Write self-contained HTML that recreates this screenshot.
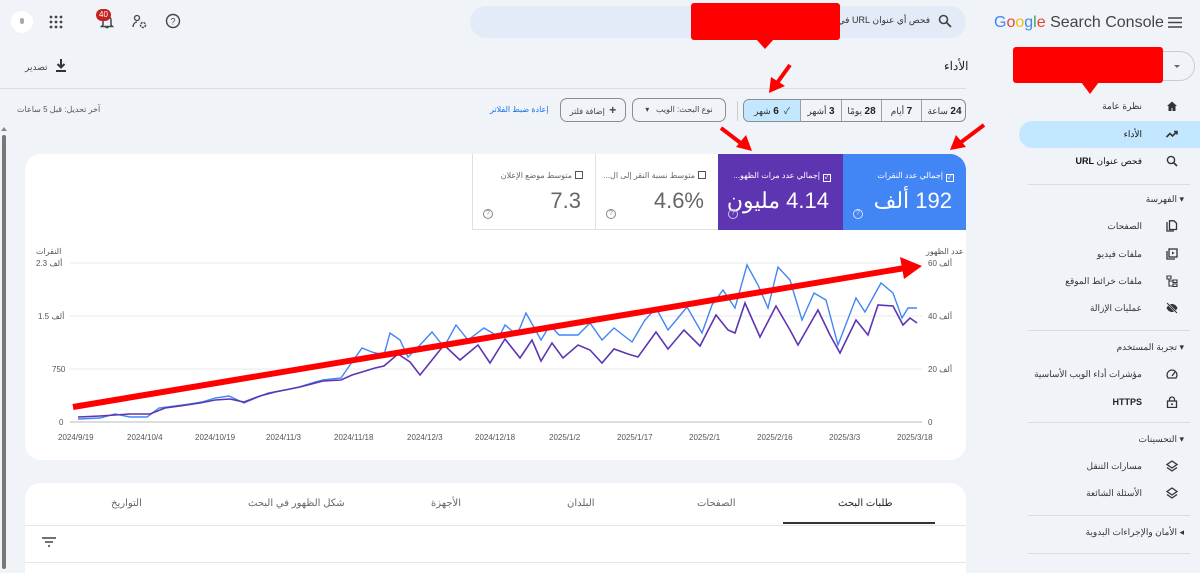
<!DOCTYPE html>
<html><head><meta charset="utf-8"><style>
*{box-sizing:border-box;margin:0;padding:0}
body{width:1200px;height:569px;overflow:hidden;background:#f0f4f9;font-family:"Liberation Sans","Noto Sans CJK SC",sans-serif;color:#1f1f1f;position:relative}
.a{position:absolute}
.t{font-size:9px;color:#444;white-space:nowrap;direction:rtl}
.side .it{position:absolute;right:0;width:180px;height:27px;font-size:9px;color:#333;text-align:right;padding-right:58px;line-height:27px;direction:rtl}
.side .ic{position:absolute;right:22px;top:7px;width:12px;height:12px}
.hr{position:absolute;height:1px;background:#dadce0}
.seg{position:absolute;top:0;height:22px;line-height:22px;font-size:9px;text-align:center;border-left:1px solid #9aa0a6;color:#333;direction:rtl}
.seg b{font-size:10px;color:#222}
.btn{position:absolute;height:24px;border:1px solid #8c8c8c;border-radius:7px;font-size:8px;line-height:22px;color:#444;text-align:center;direction:rtl}
.tile{position:absolute;top:154px;height:76px;width:124px;direction:rtl}
.tile .l{position:absolute;right:12px;top:17px;font-size:8px;white-space:nowrap}
.tile .v{position:absolute;right:14px;top:34px;font-size:22px;white-space:nowrap}
.tile .q{position:absolute;left:10px;top:55px;width:10px;height:10px;border:1px solid;border-radius:50%;font-size:7px;line-height:8px;text-align:center}
.cb{display:inline-block;width:8px;height:8px;border:1px solid;vertical-align:-1px;margin-left:3px;font-size:7px;line-height:6px;text-align:center}
</style></head><body>

<!-- header -->
<div class="a" style="left:11px;top:11px;width:22px;height:22px;border-radius:50%;background:#fff"><div class="a" style="left:9px;top:7px;width:4px;height:6px;border-radius:2px;background:#aaa"></div></div>
<svg class="a" style="left:49px;top:15px" width="14" height="14"><g fill="#444"><circle cx="2" cy="2" r="1.4"/><circle cx="7" cy="2" r="1.4"/><circle cx="12" cy="2" r="1.4"/><circle cx="2" cy="7" r="1.4"/><circle cx="7" cy="7" r="1.4"/><circle cx="12" cy="7" r="1.4"/><circle cx="2" cy="12" r="1.4"/><circle cx="7" cy="12" r="1.4"/><circle cx="12" cy="12" r="1.4"/></g></svg>
<svg class="a" style="left:100px;top:14px" width="14" height="16"><path d="M3 11V6a4 4 0 0 1 8 0v5l1.5 1.5H1.5z M5.5 13.5h3" fill="none" stroke="#444" stroke-width="1.5"/></svg>
<div class="a" style="left:96px;top:9px;width:15px;height:12px;border-radius:6px;background:#c5221f;color:#fff;font-size:8px;text-align:center;line-height:12px">40</div>
<svg class="a" style="left:132px;top:14px" width="16" height="16"><circle cx="5" cy="4" r="2.5" fill="none" stroke="#444" stroke-width="1.3"/><path d="M1 13c0-3 2-5 4-5" fill="none" stroke="#444" stroke-width="1.3"/><circle cx="11" cy="11" r="2.5" fill="none" stroke="#444" stroke-width="1.5" stroke-dasharray="2 1"/></svg>
<svg class="a" style="left:165px;top:13px" width="16" height="16"><circle cx="8" cy="8" r="6.5" fill="none" stroke="#444" stroke-width="1.4"/><text x="8" y="11.5" font-size="9" text-anchor="middle" fill="#444" font-family="Liberation Sans">?</text></svg>

<div class="a" style="left:470px;top:6px;width:496px;height:32px;border-radius:16px;background:#e4ebf8"></div>
<div class="a t" style="right:270px;top:15px;font-size:9px;color:#333">فحص أي عنوان URL في</div>
<svg class="a" style="left:938px;top:14px" width="14" height="14"><circle cx="5.5" cy="5.5" r="4" fill="none" stroke="#444" stroke-width="1.6"/><path d="M8.5 8.5L13 13" stroke="#444" stroke-width="1.8"/></svg>
<div class="a" style="left:691px;top:3px;width:149px;height:37px;background:#f00;border-radius:3px"></div>
<div class="a" style="left:756px;top:39px;border-left:9px solid transparent;border-right:9px solid transparent;border-top:10px solid #f00"></div>

<div class="a" style="left:994px;top:14px;font-size:16px;white-space:nowrap;color:#444"><span style="color:#4285f4">G</span><span style="color:#ea4335">o</span><span style="color:#fbbc05">o</span><span style="color:#4285f4">g</span><span style="color:#34a853">l</span><span style="color:#ea4335">e</span> Search Console</div>
<svg class="a" style="left:1168px;top:17px" width="14" height="11"><path d="M0 1h14M0 5.5h14M0 10h14" stroke="#444" stroke-width="1.5"/></svg>

<div class="a" style="left:1100px;top:51px;width:95px;height:30px;border:1px solid #ccc;border-radius:15px;background:#f0f4f9"></div>
<div class="a" style="left:1174px;top:65px;border-left:3px solid transparent;border-right:3px solid transparent;border-top:3px solid #666"></div>
<div class="a" style="left:1013px;top:47px;width:150px;height:36px;background:#f00;border-radius:3px"></div>
<div class="a" style="left:1081px;top:82px;border-left:9px solid transparent;border-right:9px solid transparent;border-top:12px solid #f00"></div>

<!-- title row -->
<div class="a" style="left:944px;top:59px;font-size:12px;color:#1f1f1f">الأداء</div>
<svg class="a" style="left:55px;top:59px" width="12" height="13"><path d="M6 0v8M2.5 5L6 8.5 9.5 5M1 12h10" fill="none" stroke="#333" stroke-width="2"/></svg>
<div class="a t" style="left:25px;top:62px;font-size:9px">تصدير</div>
<div class="hr" style="left:0;top:88px;width:966px"></div>

<!-- filters -->
<div class="a" style="left:743px;top:99px;width:223px;height:23px;border:1px solid #8c8c8c;border-radius:6px;overflow:hidden">
 <div class="seg" style="left:0;width:56px;background:#c2e7ff;border-left:none">✓ &nbsp;<b>6</b> شهر</div>
 <div class="seg" style="left:56px;width:41px"><b>3</b> أشهر</div>
 <div class="seg" style="left:97px;width:40px"><b>28</b> يومًا</div>
 <div class="seg" style="left:137px;width:40px"><b>7</b> أيام</div>
 <div class="seg" style="left:177px;width:46px"><b>24</b> ساعة</div>
</div>
<div class="a" style="left:737px;top:101px;width:1px;height:20px;background:#ccc"></div>
<div class="btn" style="left:632px;top:98px;width:94px">نوع البحث: الويب &nbsp; ▾</div>
<div class="btn" style="left:560px;top:98px;width:66px"><b style="font-size:12px">+</b>&nbsp; إضافة فلتر</div>
<div class="a t" style="left:490px;top:105px;font-size:8px;color:#1a73e8">إعادة ضبط الفلاتر</div>
<div class="a t" style="left:17px;top:105px;font-size:8px;color:#555">آخر تحديل: قبل 5 ساعات</div>

<!-- scrollbar -->
<div class="a" style="left:2px;top:135px;width:4px;height:434px;background:#777;border-radius:2px"></div>
<div class="a" style="left:1px;top:127px;border-left:3px solid transparent;border-right:3px solid transparent;border-bottom:4px solid #888"></div>

<!-- main card -->
<div class="a" style="left:25px;top:154px;width:941px;height:306px;background:#fff;border-radius:16px"></div>
<div class="tile" style="left:843px;width:123px;background:#4285f4;color:#fff;border-top-right-radius:16px"><div class="l"><span class="cb" style="border-color:#fff">✓</span>إجمالي عدد النقرات</div><div class="v">192 ألف</div><div class="q" style="border-color:#cfe0fc;color:#cfe0fc">?</div></div>
<div class="tile" style="left:718px;width:125px;background:#5e35b1;color:#fff"><div class="l"><span class="cb" style="border-color:#fff">✓</span>إجمالي عدد مرات الظهو...</div><div class="v">4.14 مليون</div><div class="q" style="border-color:#d0c4ee;color:#d0c4ee">?</div></div>
<div class="tile" style="left:595px;width:123px;border-left:1px solid #e0e0e0;border-bottom:1px solid #e0e0e0;color:#666"><div class="l"><span class="cb" style="border-color:#555"></span>متوسط نسبة النقر إلى ال...</div><div class="v">4.6%</div><div class="q" style="border-color:#888;color:#888">?</div></div>
<div class="tile" style="left:472px;width:123px;border-left:1px solid #e0e0e0;border-bottom:1px solid #e0e0e0;color:#666"><div class="l"><span class="cb" style="border-color:#555"></span>متوسط موضع الإعلان</div><div class="v">7.3</div><div class="q" style="border-color:#888;color:#888">?</div></div>

<svg class="a" style="left:0;top:0" width="1200" height="569">
<g stroke="#e8e8e8" stroke-width="1"><line x1="70" y1="263" x2="922" y2="263"/><line x1="70" y1="316" x2="922" y2="316"/><line x1="70" y1="369" x2="922" y2="369"/></g>
<line x1="70" y1="422" x2="922" y2="422" stroke="#bbb"/>
<g font-size="8" fill="#555" font-family="Liberation Sans,Noto Sans CJK SC,sans-serif">
<text x="36" y="254">النقرات</text><text x="36" y="266">2.3 ألف</text><text x="38" y="319">1.5 ألف</text><text x="52" y="372">750</text><text x="59" y="425">0</text>
<text x="926" y="254">عدد الظهور</text><text x="928" y="266">60 ألف</text><text x="928" y="319">40 ألف</text><text x="928" y="372">20 ألف</text><text x="928" y="425">0</text>
<text x="58" y="440">2024/9/19</text><text x="127" y="440">2024/10/4</text><text x="195" y="440">2024/10/19</text><text x="266" y="440">2024/11/3</text><text x="334" y="440">2024/11/18</text><text x="407" y="440">2024/12/3</text><text x="475" y="440">2024/12/18</text><text x="549" y="440">2025/1/2</text><text x="617" y="440">2025/1/17</text><text x="689" y="440">2025/2/1</text><text x="757" y="440">2025/2/16</text><text x="829" y="440">2025/3/3</text><text x="897" y="440">2025/3/18</text>
</g>
<polyline fill="none" stroke="#4285f4" stroke-width="1.4" points="78,419 100,418 115,414 130,417 147,417 159,408 175,406 190,404 202,402 215,398 229,396 244,403 258,397 268,393 285,390 299,387 315,382 323,380 341,378 350,365 362,348 372,352 384,355 390,333 400,340 408,357 420,345 432,332 444,347 456,325 468,340 484,328 499,337 505,325 517,335 526,313 541,340 550,325 559,335 578,335 590,323 602,340 614,328 632,342 645,320 656,308 668,330 687,307 702,333 712,305 723,290 735,308 747,265 758,285 768,308 778,267 790,280 802,320 814,293 826,300 838,345 856,298 865,312 881,283 893,293 902,318 908,308 917,308"/>
<polyline fill="none" stroke="#5e35b1" stroke-width="1.6" points="78,417 100,416 115,415 130,414 150,414 165,408 180,406 200,403 215,400 230,399 244,402 260,396 275,392 290,389 300,387 323,381 341,380 352,375 362,372 375,368 384,366 398,354 410,362 420,375 432,360 444,345 460,360 478,345 490,363 505,339 520,358 532,340 541,361 552,343 563,358 578,345 590,350 602,363 614,349 628,354 638,357 656,332 668,349 684,330 700,346 716,315 728,330 735,333 745,303 760,337 776,306 790,330 798,345 818,310 830,335 840,353 856,320 868,335 878,305 893,306 903,325 910,318 917,323"/>
<g fill="#f00" stroke="#f00">
<line x1="73" y1="407" x2="905" y2="268" stroke-width="6"/>
<polygon points="922,266 900,257 904,279" stroke="none"/>
<line x1="790" y1="65" x2="777" y2="83" stroke-width="4"/><polygon points="769,93 771,77 785,86" stroke="none"/>
<line x1="721" y1="128" x2="742" y2="144" stroke-width="4"/><polygon points="752,151 736,147 746,135" stroke="none"/>
<line x1="984" y1="125" x2="960" y2="143" stroke-width="4"/><polygon points="950,150 956,135 966,147" stroke="none"/>
</g>
</svg>

<!-- bottom card -->
<div class="a" style="left:25px;top:483px;width:941px;height:90px;background:#fff;border-radius:16px 16px 0 0"></div>
<div class="a t" style="left:838px;top:498px;font-size:10px;color:#222">طلبات البحث</div>
<div class="a t" style="left:697px;top:498px;font-size:10px;color:#666">الصفحات</div>
<div class="a t" style="left:567px;top:498px;font-size:10px;color:#666">البلدان</div>
<div class="a t" style="left:431px;top:498px;font-size:10px;color:#666">الأجهزة</div>
<div class="a t" style="left:248px;top:498px;font-size:10px;color:#666">شكل الظهور في البحث</div>
<div class="a t" style="left:111px;top:498px;font-size:10px;color:#666">التواريخ</div>
<div class="hr" style="left:25px;top:525px;width:941px;background:#e6e6e6"></div>
<div class="a" style="left:783px;top:522px;width:152px;height:2px;background:#333"></div>
<svg class="a" style="left:42px;top:537px" width="14" height="10"><path d="M0 1h14M3 5h8M6 9h2" stroke="#444" stroke-width="1.5"/></svg>
<div class="hr" style="left:25px;top:562px;width:941px;background:#e6e6e6"></div>

<!-- sidebar -->
<div class="side">
<div class="a" style="left:1019px;top:121px;width:181px;height:27px;background:#c2e7ff;border-radius:14px 0 0 14px"></div>
<div class="it" style="top:93px">نظرة عامة<svg class="ic" viewBox="0 0 12 12"><path d="M1 6L6 1.5 11 6H9.5v5h-3V8h-1v3h-3V6z" fill="#333"/></svg></div>
<div class="it" style="top:121px;color:#111">الأداء<svg class="ic" viewBox="0 0 12 12"><path d="M0.5 9L4 5.5 6.5 8 11 3.5M8 3.5h3v3" fill="none" stroke="#333" stroke-width="1.6"/></svg></div>
<div class="it" style="top:148px;color:#111">فحص عنوان <b>URL</b><svg class="ic" viewBox="0 0 12 12"><circle cx="5" cy="5" r="3.6" fill="none" stroke="#333" stroke-width="1.4"/><path d="M7.5 7.5L11 11" stroke="#333" stroke-width="1.6"/></svg></div>
<div class="hr" style="left:1028px;top:184px;width:162px"></div>
<div class="it" style="top:186px;padding-right:16px">▾ الفهرسة</div>
<div class="it" style="top:213px">الصفحات<svg class="ic" viewBox="0 0 12 12"><path d="M1 2v9h7M3.5 0.8h4.5l2.5 2.5v6.2h-7z" fill="none" stroke="#333" stroke-width="1.3"/></svg></div>
<div class="it" style="top:241px">ملفات فيديو<svg class="ic" viewBox="0 0 12 12"><rect x="3" y="1" width="8" height="8" fill="none" stroke="#333" stroke-width="1.3"/><path d="M1 3v8h8" fill="none" stroke="#333" stroke-width="1.3"/><path d="M6 3.5v3l2.5-1.5z" fill="#333"/></svg></div>
<div class="it" style="top:268px">ملفات خرائط الموقع<svg class="ic" viewBox="0 0 12 12"><path d="M1 1h4v3H1zM7 5h4v2.5H7zM7 9h4v2.5H7zM3 4v7h4M3 6h4" fill="none" stroke="#333" stroke-width="1.1"/></svg></div>
<div class="it" style="top:295px">عمليات الإزالة<svg class="ic" viewBox="0 0 12 12"><path d="M0.5 6C2 3 4 2 6 2s4 1 5.5 4C10 9 8 10 6 10S2 9 0.5 6z" fill="#333"/><path d="M1 1l10 10" stroke="#f0f4f9" stroke-width="2"/><path d="M1 1l10 10" stroke="#333" stroke-width="1.1"/></svg></div>
<div class="hr" style="left:1028px;top:330px;width:162px"></div>
<div class="it" style="top:334px;padding-right:16px">▾ تجربة المستخدم</div>
<div class="it" style="top:361px">مؤشرات أداء الويب الأساسية<svg class="ic" viewBox="0 0 12 12"><path d="M2 10a5 5 0 1 1 8 0z" fill="none" stroke="#333" stroke-width="1.3"/><path d="M6 8l3-4" stroke="#333" stroke-width="1.3"/></svg></div>
<div class="it" style="top:389px;font-weight:bold;color:#222">HTTPS<svg class="ic" viewBox="0 0 12 12"><rect x="1.5" y="5" width="9" height="6.5" fill="none" stroke="#333" stroke-width="1.3"/><path d="M3.5 5V3.5a2.5 2.5 0 0 1 5 0V5" fill="none" stroke="#333" stroke-width="1.3"/><circle cx="6" cy="8.2" r="1" fill="#333"/></svg></div>
<div class="hr" style="left:1028px;top:422px;width:162px"></div>
<div class="it" style="top:426px;padding-right:16px">▾ التحسينات</div>
<div class="it" style="top:453px">مسارات التنقل<svg class="ic" viewBox="0 0 12 12"><path d="M6 1l5 3.5L6 8 1 4.5zM1 7.5L6 11l5-3.5" fill="none" stroke="#333" stroke-width="1.3"/></svg></div>
<div class="it" style="top:480px">الأسئلة الشائعة<svg class="ic" viewBox="0 0 12 12"><path d="M6 1l5 3.5L6 8 1 4.5zM1 7.5L6 11l5-3.5" fill="none" stroke="#333" stroke-width="1.3"/></svg></div>
<div class="hr" style="left:1028px;top:515px;width:162px"></div>
<div class="it" style="top:519px;padding-right:16px">◂ الأمان والإجراءات اليدوية</div>
<div class="hr" style="left:1028px;top:553px;width:162px"></div>
</div>
</body></html>
